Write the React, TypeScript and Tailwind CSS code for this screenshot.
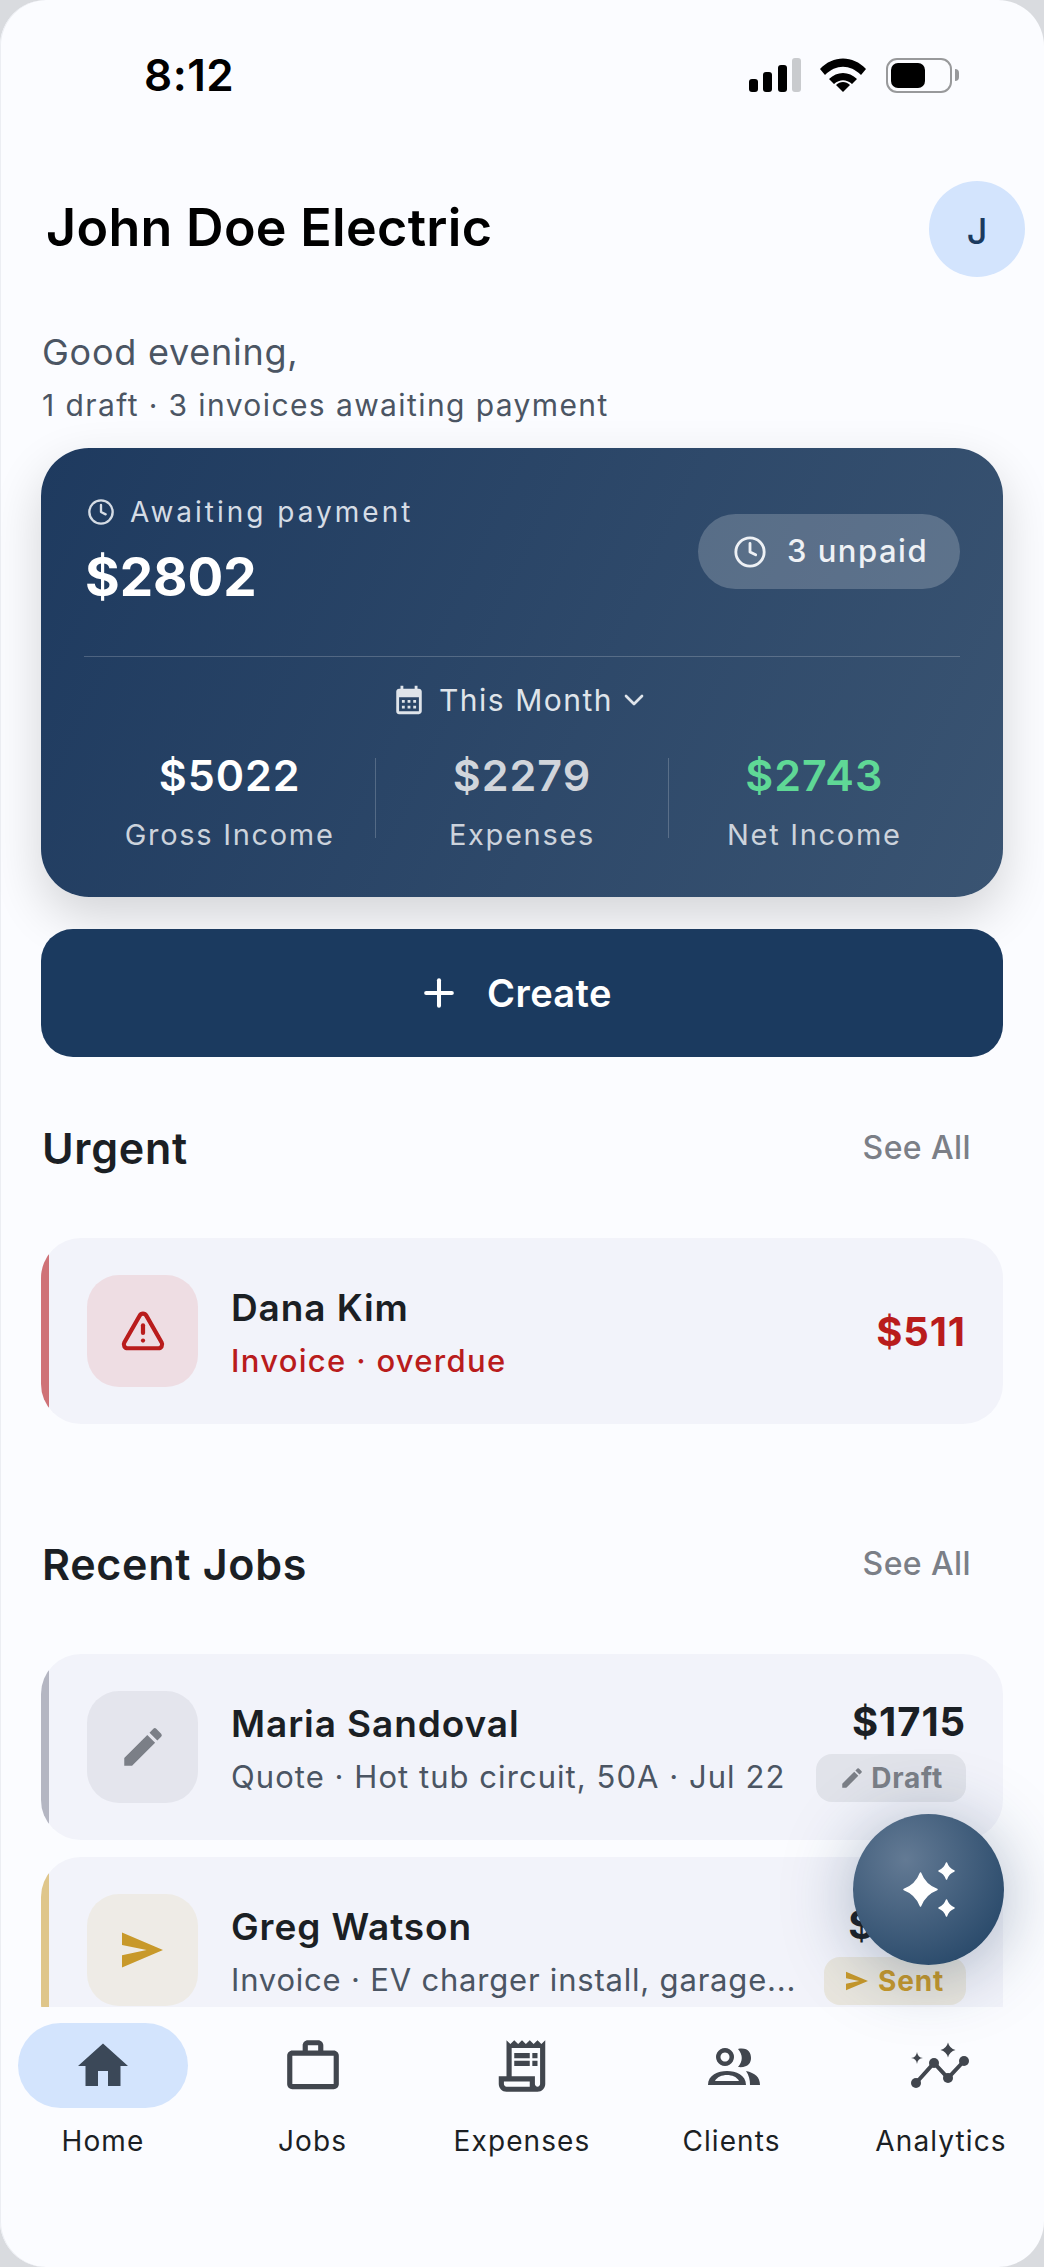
import React from 'react';
import { ChevronDown, Clock, Plus, TriangleAlert } from 'lucide-react';
import {
  MdCalendarMonth,
  MdEdit,
  MdHome,
  MdOutlineReceiptLong,
  MdWorkOutline,
} from 'react-icons/md';

const SendIcon = ({ className }: { className: string }) => (
  <svg viewBox="0 0 40 34" className={className} fill="currentColor">
    <path d="M0 0 L40 17 L0 34 L0 22 L24 17 L0 12 Z" />
  </svg>
);

const ClientsIcon = () => (
  <svg viewBox="0 0 60 50" className="ml-[2px] w-[60px] h-[50px]" fill="#41464e">
    <path
      fillRule="evenodd"
      d="M22 7 a9 9 0 1 0 0.01 0 Z M22 11.5 a4.5 4.5 0 1 1 -0.01 0 Z"
    />
    <path d="M35 8 C45 6 48 12 48 17 C48 22 45 27 35 26 C40 20 40 14 35 8 Z" />
    <path
      fillRule="evenodd"
      d="M5 44 C5 34 15 30 24 30 C33 30 43 34 43 44 Z M12 40 C14 36 19 34 24 34 C29 34 34 36 36 40 Z"
    />
    <path d="M43 30 C52 32 57 36 57 44 L47 44 C47 39 46 34 43 30 Z" />
  </svg>
);

const AnalyticsIcon = () => (
  <svg viewBox="0 0 60 50" className="w-[60px] h-[50px]" fill="#41464e">
    <path d="M5 42 L23 22 L37 37 L53 20" fill="none" stroke="#41464e" strokeWidth="4" />
    <circle cx="5" cy="42" r="5" />
    <circle cx="23" cy="22" r="5" />
    <circle cx="37" cy="37" r="5" />
    <circle cx="53" cy="20" r="5" />
    <path d="M37 1.5 Q38.5 7.5 44.5 9 Q38.5 10.5 37 16.5 Q35.5 10.5 29.5 9 Q35.5 7.5 37 1.5 Z" />
    <path d="M6 11 Q6.6 16.4 12 17 Q6.6 17.6 6 23 Q5.4 17.6 0 17 Q5.4 16.4 6 11 Z" />
  </svg>
);

const StatusIcons = () => (
  <div className="flex items-center">
    <svg viewBox="0 0 52 34" className="w-[52px] h-[34px]">
      <rect x="0" y="21" width="9" height="13" rx="3" fill="#000" />
      <rect x="14" y="14" width="9" height="20" rx="3" fill="#000" />
      <rect x="29" y="7" width="9" height="27" rx="3" fill="#000" />
      <rect x="43" y="0" width="9" height="34" rx="3" fill="#c9cbce" />
    </svg>
    <svg viewBox="0 0 46 34" className="w-[46px] h-[34px] ml-[19px]">
      <path d="M0 11 C13 -3 33 -3 46 11 L41 17 C30 6 16 6 5 17 Z" fill="#000" />
      <path d="M9 21 C17 13 29 13 37 21 L32 26 C26 21 20 21 14 26 Z" fill="#000" />
      <path d="M16 27 C20 23 26 23 30 27 L23 34 Z" fill="#000" />
    </svg>
    <div className="ml-[20px] w-[66px] h-[35px] rounded-[11px] border-[2px] border-[#98999b] p-[3px] flex">
      <div className="w-[34px] h-full rounded-[7px] bg-black" />
    </div>
    <div className="ml-[3px] w-[4px] h-[12px] rounded-r-full bg-[#98999b]" />
  </div>
);

const SectionHeader = ({ title }: { title: string }) => (
  <div className="flex items-center justify-between h-[60px] pl-[42px] pr-[73px]">
    <h2 className="text-[43px] leading-[60px] font-semibold tracking-[0.7px] text-[#1b1f24]">{title}</h2>
    <span className="text-[32px] font-medium tracking-[0.4px] text-[#7b7f87]">See All</span>
  </div>
);

interface JobRowProps {
  bar: string;
  iconBox: string;
  icon: React.ReactNode;
  name: string;
  detail: string;
  detailClass: string;
  amount: string;
  amountColor?: string;
  badge?: React.ReactNode;
}

const JobRow = ({ bar, iconBox, icon, name, detail, detailClass, amount, amountColor, badge }: JobRowProps) => (
  <div className="mx-[41px] h-[186px] shrink-0 rounded-[40px] overflow-hidden flex bg-[#f2f3fa]">
    <div className={`w-[8px] ${bar}`} />
    <div className="flex-1 min-w-0 flex items-center pl-[38px] pr-[37px]">
      <div className={`w-[111px] h-[112px] shrink-0 rounded-[32px] flex items-center justify-center ${iconBox}`}>
        {icon}
      </div>
      <div className="ml-[33px] pt-[7px] flex-1 min-w-0">
        <div className="text-[37px] leading-[50px] font-semibold tracking-[0.9px] text-[#1b1f24]">{name}</div>
        <div className={`mt-[3px] text-[31px] leading-[50px] whitespace-nowrap ${detailClass}`}>{detail}</div>
      </div>
      <div className={`flex flex-col items-end ${badge ? 'pt-[6px]' : 'pt-[2px]'}`}>
        <div className={`text-[40px] leading-[48px] font-bold tracking-[0.9px] ${amountColor ?? 'text-[#1b1f24]'}`}>{amount}</div>
        {badge}
      </div>
    </div>
  </div>
);

const Stat = ({ value, label, color }: { value: string; label: string; color: string }) => (
  <div className="flex-1 flex flex-col items-center">
    <div className={`text-[43px] leading-[50px] font-semibold tracking-[1px] ${color}`}>{value}</div>
    <div className="mt-[15px] text-[29px] leading-[40px] tracking-[1.7px] text-[#ccd3dc]">{label}</div>
  </div>
);

const NavItem = ({ label, icon, active }: { label: string; icon: React.ReactNode; active?: boolean }) => (
  <div className="w-[170px] flex flex-col items-center">
    <div className={`w-[170px] h-[85px] rounded-full flex items-center justify-center ${active ? 'bg-[#d3e4fd]' : ''}`}>
      {icon}
    </div>
    <div className="mt-[14px] text-[28px] leading-[38px] tracking-[1.1px] text-[#1b1f24] whitespace-nowrap">{label}</div>
  </div>
);

export default function App() {
  return (
    <div className="w-[1044px] h-[2267px] bg-[#d9dbdf] overflow-hidden" style={{ fontFamily: 'Inter, sans-serif' }}>
      <div className="relative w-full h-full rounded-[46px] bg-[#fbfcff] overflow-hidden shadow-[inset_1px_0_0_#eceef3]">
        <div className="h-[2007px] overflow-hidden flex flex-col">
          <div className="h-[150px] shrink-0 flex items-center justify-between pl-[144px] pr-[85px]">
            <span className="text-[44px] font-semibold tracking-[0.5px] text-black">8:12</span>
            <StatusIcons />
          </div>

          <div className="mt-[31px] h-[96px] shrink-0 flex items-center justify-between pl-[46px] pr-[19px]">
            <h1 className="pb-[2px] text-[52px] font-semibold text-black tracking-[0.3px]">John Doe Electric</h1>
            <div className="w-[96px] h-[96px] pt-[4px] rounded-full bg-[#d3e4fd] flex items-center justify-center text-[36px] font-medium text-[#1b3a5f]">
              J
            </div>
          </div>

          <div className="mt-[53px] ml-[42px] text-[36px] leading-[44px] tracking-[0.75px] text-[#4b5563]">Good evening,</div>
          <div className="mt-[11px] ml-[42px] text-[30px] leading-[40px] tracking-[1.4px] text-[#4b5563]">1 draft · 3 invoices awaiting payment</div>

          <div className="mt-[23px] mx-[41px] h-[449px] shrink-0 rounded-[48px] px-[43px] pt-[46px] bg-[linear-gradient(115deg,#1e3a5f,#3a5472)] shadow-[0_20px_50px_rgba(0,0,0,0.16)]">
            <div className="flex justify-between h-[115px]">
              <div>
                <div className="pl-[3px] flex items-center h-[36px] text-[#d5dce5]">
                  <Clock className="w-[28px] h-[28px]" strokeWidth={2} />
                  <span className="ml-[15px] text-[28px] tracking-[3px]">Awaiting payment</span>
                </div>
                <div className="mt-[15px] pl-[1px] text-[53px] leading-[64px] font-bold text-white">$2802</div>
              </div>
              <div className="mt-[20px] w-[262px] h-[75px] rounded-full bg-white/20 flex items-center pl-[35px] text-[#eef1f5]">
                <Clock className="w-[34px] h-[34px]" strokeWidth={2} />
                <span className="ml-[20px] text-[31px] font-medium tracking-[1.5px]">3 unpaid</span>
              </div>
            </div>
            <div className="mt-[47px] h-[1px] bg-white/20" />
            <div className="mt-[23px] h-[40px] pr-[2px] flex items-center justify-center text-[#dfe4ea]">
              <MdCalendarMonth className="w-[34px] h-[34px]" />
              <span className="ml-[13px] text-[30px] tracking-[1.5px]">This Month</span>
              <ChevronDown className="ml-[5px] w-[32px] h-[32px]" strokeWidth={2} />
            </div>
            <div className="mt-[30px] flex">
              <Stat value="$5022" label="Gross Income" color="text-white" />
              <div className="mt-[8px] w-[1px] h-[80px] bg-white/20" />
              <Stat value="$2279" label="Expenses" color="text-[#d1d5db]" />
              <div className="mt-[8px] w-[1px] h-[80px] bg-white/20" />
              <Stat value="$2743" label="Net Income" color="text-[#5fd896]" />
            </div>
          </div>

          <div className="mt-[32px] mx-[41px] h-[128px] shrink-0 pr-[15px] rounded-[32px] bg-[#1b3a5f] flex items-center justify-center text-white">
            <Plus className="w-[44px] h-[44px]" strokeWidth={2.2} />
            <span className="ml-[26px] text-[38px] font-semibold tracking-[0.4px]">Create</span>
          </div>

          <div className="mt-[61px]">
            <SectionHeader title="Urgent" />
          </div>
          <div className="mt-[60px]">
            <JobRow
              bar="bg-[#cf7277]"
              iconBox="bg-[#eedde3]"
              icon={<TriangleAlert className="w-[46px] h-[46px] text-[#b91c1c]" strokeWidth={2.2} />}
              name="Dana Kim"
              detail="Invoice · overdue"
              detailClass="text-[#b91c1c] font-medium tracking-[1.3px]"
              amount="$511"
              amountColor="text-[#b91c1c]"
            />
          </div>

          <div className="mt-[110px]">
            <SectionHeader title="Recent Jobs" />
          </div>
          <div className="mt-[60px] flex flex-col gap-[17px]">
            <JobRow
              bar="bg-[#b4b6c2]"
              iconBox="bg-[#e4e5ed]"
              icon={<MdEdit className="w-[50px] h-[50px] text-[#7b7f87]" />}
              name="Maria Sandoval"
              detail="Quote · Hot tub circuit, 50A · Jul 22"
              detailClass="text-[#4b5563] tracking-[1.05px]"
              amount="$1715"
              badge={
                <div className="mt-[8px] h-[48px] px-[23px] rounded-[16px] bg-[#e1e3ea] flex items-center text-[#7b7f87]">
                  <MdEdit className="w-[26px] h-[26px]" />
                  <span className="ml-[6px] text-[28px] font-bold tracking-[0.8px]">Draft</span>
                </div>
              }
            />
            <JobRow
              bar="bg-[#dfc68b]"
              iconBox="bg-[#eeebe6]"
              icon={<SendIcon className="w-[41px] h-[36px] text-[#c8992a]" />}
              name="Greg Watson"
              detail="Invoice · EV charger install, garage..."
              detailClass="text-[#4b5563] tracking-[0.8px]"
              amount="$1145"
              badge={
                <div className="mt-[8px] h-[48px] px-[22px] rounded-[16px] bg-[#e9e6de] flex items-center text-[#c8992a]">
                  <SendIcon className="w-[22px] h-[20px]" />
                  <span className="ml-[10px] text-[28px] font-bold tracking-[0.8px]">Sent</span>
                </div>
              }
            />
          </div>
        </div>

        <div className="flex justify-between pl-[18px] pr-[18px] pt-[16px]">
          <NavItem active label="Home" icon={<MdHome className="w-[60px] h-[60px] text-[#3b4858]" />} />
          <NavItem label="Jobs" icon={<MdWorkOutline className="w-[62px] h-[62px] text-[#41464e]" />} />
          <NavItem label="Expenses" icon={<MdOutlineReceiptLong className="w-[62px] h-[62px] text-[#41464e]" />} />
          <NavItem label="Clients" icon={<ClientsIcon />} />
          <NavItem label="Analytics" icon={<AnalyticsIcon />} />
        </div>

        <div className="absolute left-[853px] top-[1814px] w-[151px] h-[151px] rounded-full flex items-center justify-center bg-[radial-gradient(circle_at_35%_30%,#637a94,#1f4163_95%)] shadow-[0_8px_70px_rgba(30,58,95,0.35)]">
          <svg viewBox="0 0 52 55" className="w-[52px] h-[55px]" fill="#fff" stroke="#fff" strokeWidth="1.5" strokeLinejoin="round">
            <path d="M17.5 11 Q22 23 34 27.5 Q22 32 17.5 44 Q13 32 1 27.5 Q13 23 17.5 11 Z" />
            <path d="M43.5 1 Q45.5 7 51 9 Q45.5 11 43.5 17 Q41.5 11 36 9 Q41.5 7 43.5 1 Z" />
            <path d="M43.5 38 Q45.5 44 51 46 Q45.5 48 43.5 54 Q41.5 48 36 46 Q41.5 44 43.5 38 Z" />
          </svg>
        </div>
      </div>
    </div>
  );
}
